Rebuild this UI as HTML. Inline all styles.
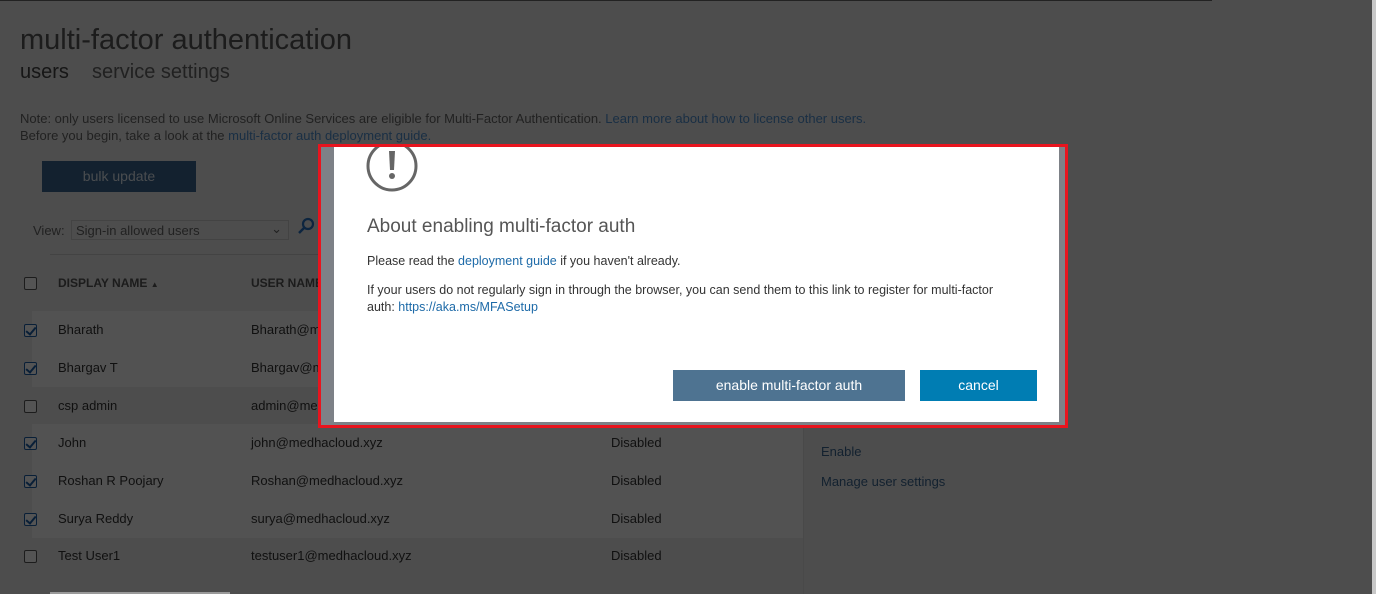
<!DOCTYPE html>
<html><head><meta charset="utf-8"><style>
*{margin:0;padding:0;box-sizing:border-box}
html,body{width:1376px;height:594px;background:#e9e9e9}
body{font-family:"Liberation Sans",sans-serif;position:relative;overflow:hidden;color:#333}
.a{position:absolute;white-space:nowrap}
.cb{position:absolute;left:24px;width:13px;height:13px;border:1px solid #555;border-radius:2px;background:#fff}
.cb.on{border-color:#1d5fa8}
.cb.on:after{content:"";position:absolute;left:3px;top:0px;width:4px;height:8px;border:solid #1d5fa8;border-width:0 2px 2px 0;transform:rotate(40deg)}
.row{position:absolute;left:0;width:803px;height:38px;font-size:13px;color:#333}
.row.sel .bg{position:absolute;left:32px;top:0;width:771px;height:38px;background:#f8f8f8}
.row span{position:absolute;top:11px}
.ov{position:absolute;left:0;top:0;width:1376px;height:594px;background:rgba(0,0,0,0.67)}
</style></head><body>
<div class="a" style="left:0;top:0;width:1376px;height:594px;background:#e9e9e9"></div>
<div class="a" style="left:20px;top:24px;font-size:29px;color:#555">multi-factor authentication</div>
<div class="a" style="left:20px;top:61px;font-size:20px;color:#444">users</div>
<div class="a" style="left:92px;top:61px;font-size:20px;color:#666">service settings</div>
<div class="a" style="left:20px;top:111px;font-size:13px;color:#666">Note: only users licensed to use Microsoft Online Services are eligible for Multi-Factor Authentication. <span style="color:#4f8fcf">Learn more about how to license other users.</span></div>
<div class="a" style="left:20px;top:128px;font-size:13px;color:#666">Before you begin, take a look at the <span style="color:#4f8fcf">multi-factor auth deployment guide.</span></div>
<div class="a" style="left:42px;top:161px;width:154px;height:31px;background:#3a6690;color:#dde6ee;font-size:14px;text-align:center;line-height:31px">bulk update</div>
<div class="a" style="left:33px;top:223px;font-size:13px;color:#666">View:</div>
<div class="a" style="left:71px;top:220px;width:218px;height:20px;border:1px solid #ccc;font-size:13px;color:#666;padding:2px 4px">Sign-in allowed users<span style="position:absolute;right:6px;top:0">⌄</span></div>
<svg class="a" style="left:297px;top:217px" width="18" height="18"><circle cx="11" cy="7" r="5" fill="none" stroke="#2a70c0" stroke-width="2.2"/><line x1="7" y1="11" x2="2" y2="16" stroke="#2a70c0" stroke-width="2.5"/></svg>
<div class="a" style="left:50px;top:254px;width:270px;height:1px;background:#ccc"></div>
<div class="cb" style="top:277px"></div>
<div class="a" style="left:58px;top:276px;font-size:12px;font-weight:bold;color:#555">DISPLAY NAME <span style="font-size:8px">▲</span></div>
<div class="a" style="left:251px;top:276px;font-size:12px;font-weight:bold;color:#555">USER NAME</div>
<div class="a" style="left:803px;top:300px;width:1px;height:294px;background:#ddd"></div>
<div class="row sel" style="top:311px"><div class="bg"></div><div class="cb on" style="top:13px"></div><span style="left:58px">Bharath</span><span style="left:251px">Bharath@medhacloud.xyz</span></div>
<div class="row sel" style="top:349px"><div class="bg"></div><div class="cb on" style="top:13px"></div><span style="left:58px">Bhargav T</span><span style="left:251px">Bhargav@medhacloud.xyz</span></div>
<div class="row" style="top:387px"><div class="cb" style="top:13px"></div><span style="left:58px">csp admin</span><span style="left:251px">admin@medhacloud.xyz</span></div>
<div class="row sel" style="top:424px"><div class="bg"></div><div class="cb on" style="top:13px"></div><span style="left:58px">John</span><span style="left:251px">john@medhacloud.xyz</span><span style="left:611px">Disabled</span></div>
<div class="row sel" style="top:462px"><div class="bg"></div><div class="cb on" style="top:13px"></div><span style="left:58px">Roshan R Poojary</span><span style="left:251px">Roshan@medhacloud.xyz</span><span style="left:611px">Disabled</span></div>
<div class="row sel" style="top:500px"><div class="bg"></div><div class="cb on" style="top:13px"></div><span style="left:58px">Surya Reddy</span><span style="left:251px">surya@medhacloud.xyz</span><span style="left:611px">Disabled</span></div>
<div class="row" style="top:537px"><div class="cb" style="top:13px"></div><span style="left:58px">Test User1</span><span style="left:251px">testuser1@medhacloud.xyz</span><span style="left:611px">Disabled</span></div>
<div class="a" style="left:821px;top:444px;font-size:13px;color:#3a6690">Enable</div>
<div class="a" style="left:821px;top:474px;font-size:13px;color:#3a6690">Manage user settings</div>

<div class="ov"></div>
<div class="a" style="left:0;top:0;width:1212px;height:1px;background:#222"></div>
<div class="a" style="left:1372px;top:0;width:4px;height:594px;background:#c8c8c8"></div>
<div class="a" style="left:50px;top:592px;width:180px;height:2px;background:#999"></div>

<div class="a" style="left:318px;top:144px;width:750px;height:284px;border:3px solid #e8141e;background:#7d8187"></div>
<div class="a" style="left:334px;top:147px;width:725px;height:275px;background:#fff"></div>
<svg class="a" style="left:366px;top:147px" width="54" height="48"><circle cx="26" cy="19" r="24" fill="none" stroke="#666" stroke-width="3"/><path d="M23 4h6l-1 19h-4z" fill="#666"/><circle cx="26" cy="29" r="3" fill="#666"/></svg>
<div class="a" style="left:367px;top:216px;font-size:19px;color:#555">About enabling multi-factor auth</div>
<div class="a" style="left:367px;top:254px;font-size:12.5px;color:#333">Please read the <span style="color:#1d6aa8">deployment guide</span> if you haven't already.</div>
<div class="a" style="left:367px;top:283px;font-size:12.5px;color:#333">If your users do not regularly sign in through the browser, you can send them to this link to register for multi-factor</div>
<div class="a" style="left:367px;top:300px;font-size:12.5px;color:#333">auth: <span style="color:#1d6aa8">https://aka.ms/MFASetup</span></div>
<div class="a" style="left:673px;top:370px;width:232px;height:31px;background:#4e7391;color:#fff;font-size:14px;text-align:center;line-height:31px">enable multi-factor auth</div>
<div class="a" style="left:920px;top:370px;width:117px;height:31px;background:#007db3;color:#fff;font-size:14px;text-align:center;line-height:31px">cancel</div>
</body></html>
